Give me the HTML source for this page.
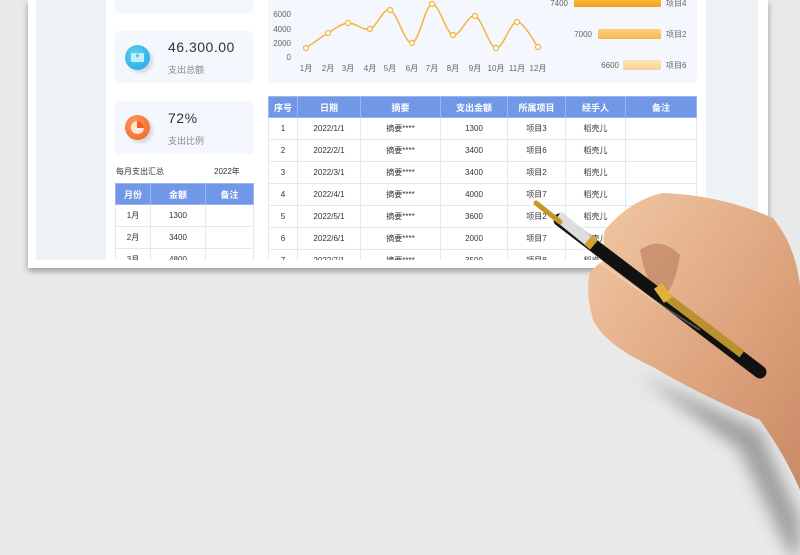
<!DOCTYPE html>
<html><head><meta charset="utf-8"><style>
*{margin:0;padding:0;box-sizing:border-box}
body{width:800px;height:555px;overflow:hidden;background:#e9e9e9;font-family:"Liberation Sans","Noto Sans CJK SC",sans-serif;position:relative}
.abs{position:absolute}
.paper{left:28px;top:0;width:740px;height:268px;background:#fff;box-shadow:0 3px 6px rgba(0,0,0,.35)}
.side{left:36px;top:0;width:70px;height:260px;background:#eef1f6}
.side2{left:706px;top:0;width:52px;height:260px;background:#eef1f6}
.card{background:#f4f7fd;border-radius:4px}
.val{font-size:14px;color:#333;letter-spacing:.5px}
.lab{font-size:9px;color:#888}
table{border-collapse:collapse;font-size:8px;color:#333;text-align:center}
td,th{border:1px solid #e3e8f3;height:22px;padding:0}
th{background:#7198e6;color:#fff;font-weight:bold;font-size:9px;border-color:#9db6ee;height:21px}
</style></head><body>
<div class="abs paper"></div>
<div class="abs side"></div>
<div class="abs side2"></div>
<div class="abs card" style="left:115px;top:-10px;width:138px;height:23px"></div>
<div class="abs card" style="left:115px;top:31px;width:138px;height:52px"></div>
<div class="abs card" style="left:115px;top:101px;width:139px;height:53px"></div>
<div class="abs" style="left:125px;top:45px;width:25px;height:25px;border-radius:50%;background:radial-gradient(circle at 40% 35%,#5fd2f3,#1aa5dd);box-shadow:3px 3px 3px rgba(0,0,0,.12)"></div>
<div class="abs" style="left:131px;top:53px;width:13px;height:9px;background:#bff0ff;border-radius:1px;font-size:6px;color:#2aa7dc;text-align:center;line-height:9px">¥</div>
<div class="abs" style="left:125px;top:115px;width:25px;height:25px;border-radius:50%;background:radial-gradient(circle at 40% 35%,#ff9a5e,#f0601e);box-shadow:3px 3px 3px rgba(0,0,0,.12)"></div>
<div class="abs" style="left:131px;top:121px;width:13px;height:13px;border-radius:50%;background:#ffe8da"></div>
<div class="abs" style="left:137px;top:121px;width:7px;height:7px;background:#f0601e;border-radius:0 7px 0 0"></div>
<div class="abs val" style="left:168px;top:39px">46.300.00</div>
<div class="abs lab" style="left:168px;top:63px">支出总额</div>
<div class="abs val" style="left:168px;top:110px">72%</div>
<div class="abs lab" style="left:168px;top:134px">支出比例</div>
<div class="abs" style="left:116px;top:166px;font-size:8px;color:#333">每月支出汇总</div>
<div class="abs" style="left:214px;top:166px;font-size:8px;color:#333">2022年</div>
<div class="abs" style="left:115px;top:183px;width:139px;height:77px;overflow:hidden">
<table style="width:139px"><tr><th style="width:35px">月份</th><th style="width:55px">金额</th><th>备注</th></tr>
<tr><td>1月</td><td>1300</td><td></td></tr><tr><td>2月</td><td>3400</td><td></td></tr><tr><td>3月</td><td>4800</td><td></td></tr></table></div>
<div class="abs card" style="left:268px;top:-10px;width:429px;height:93px"></div>
<svg class="abs" style="left:0;top:0" width="800" height="90">
<defs><linearGradient id="b1" x1="0" y1="0" x2="0" y2="1"><stop offset="0" stop-color="#fdc24a"/><stop offset="1" stop-color="#f5a01a"/></linearGradient>
<linearGradient id="b2" x1="0" y1="0" x2="0" y2="1"><stop offset="0" stop-color="#fed37c"/><stop offset="1" stop-color="#f6b850"/></linearGradient>
<linearGradient id="b3" x1="0" y1="0" x2="0" y2="1"><stop offset="0" stop-color="#fde4b0"/><stop offset="1" stop-color="#f6d394"/></linearGradient></defs>
<g font-size="8" fill="#666" text-anchor="end" font-family="Liberation Sans">
<text x="291" y="17">6000</text><text x="291" y="32">4000</text><text x="291" y="46">2000</text><text x="291" y="60">0</text></g>
<g font-size="8" fill="#666" text-anchor="middle" font-family="Liberation Sans,Noto Sans CJK SC">
<text x="306" y="71">1月</text><text x="328" y="71">2月</text><text x="348" y="71">3月</text><text x="370" y="71">4月</text><text x="390" y="71">5月</text><text x="412" y="71">6月</text><text x="432" y="71">7月</text><text x="453" y="71">8月</text><text x="475" y="71">9月</text><text x="496" y="71">10月</text><text x="517" y="71">11月</text><text x="538" y="71">12月</text></g>
<path d="M306 48 C309.7 45.5 321 37.2 328 33 C335 28.8 341 23.7 348 23 C355 22.3 363 31.2 370 29 C377 26.8 383 7.7 390 10 C397 12.3 405 44 412 43 C419 42 425.2 5.3 432 4 C438.8 2.7 445.8 33 453 35 C460 37 467.8 13.8 475 16 C482 18.2 489 47 496 48 C503 49 510 22.2 517 22 C524 21.8 534.5 42.8 538 47" fill="none" stroke="#f4b43a" stroke-width="1.5"/>
<g fill="#fff" stroke="#f4b43a" stroke-width="1.2">
<circle cx="306" cy="48" r="2.5"/><circle cx="328" cy="33" r="2.5"/><circle cx="348" cy="23" r="2.5"/><circle cx="370" cy="29" r="2.5"/><circle cx="390" cy="10" r="2.5"/><circle cx="412" cy="43" r="2.5"/><circle cx="432" cy="4" r="2.5"/><circle cx="453" cy="35" r="2.5"/><circle cx="475" cy="16" r="2.5"/><circle cx="496" cy="48" r="2.5"/><circle cx="517" cy="22" r="2.5"/><circle cx="538" cy="47" r="2.5"/></g>
<rect x="574" y="-3" width="87" height="10" fill="url(#b1)"/>
<rect x="598" y="29" width="63" height="10" fill="url(#b2)"/>
<rect x="623" y="60" width="38" height="10" fill="url(#b3)"/>
<g font-size="8" fill="#666" font-family="Liberation Sans,Noto Sans CJK SC">
<text x="568" y="6" text-anchor="end">7400</text><text x="592" y="37" text-anchor="end">7000</text><text x="619" y="68" text-anchor="end">6600</text>
<text x="666" y="6">项目4</text><text x="666" y="37">项目2</text><text x="666" y="68">项目6</text></g>
</svg>
<div class="abs" style="left:268px;top:96px;width:429px;height:164px;overflow:hidden">
<table style="width:429px">
<tr><th style="width:29px">序号</th><th style="width:63px">日期</th><th style="width:80px">摘要</th><th style="width:67px">支出金额</th><th style="width:58px">所属项目</th><th style="width:60px">经手人</th><th>备注</th></tr>
<tr><td>1</td><td>2022/1/1</td><td>摘要****</td><td>1300</td><td>项目3</td><td>稻壳儿</td><td></td></tr>
<tr><td>2</td><td>2022/2/1</td><td>摘要****</td><td>3400</td><td>项目6</td><td>稻壳儿</td><td></td></tr>
<tr><td>3</td><td>2022/3/1</td><td>摘要****</td><td>3400</td><td>项目2</td><td>稻壳儿</td><td></td></tr>
<tr><td>4</td><td>2022/4/1</td><td>摘要****</td><td>4000</td><td>项目7</td><td>稻壳儿</td><td></td></tr>
<tr><td>5</td><td>2022/5/1</td><td>摘要****</td><td>3600</td><td>项目2</td><td>稻壳儿</td><td></td></tr>
<tr><td>6</td><td>2022/6/1</td><td>摘要****</td><td>2000</td><td>项目7</td><td>稻壳儿</td><td></td></tr>
<tr><td>7</td><td>2022/7/1</td><td>摘要****</td><td>3500</td><td>项目8</td><td>稻壳儿</td><td></td></tr>
</table></div>
<svg class="abs" style="left:0;top:0" width="800" height="555">
<defs><linearGradient id="sk" x1="0" y1="0" x2="1" y2="1"><stop offset="0" stop-color="#f2c9a5"/><stop offset=".6" stop-color="#dca27c"/><stop offset="1" stop-color="#c98a66"/></linearGradient>
<filter id="bl"><feGaussianBlur stdDeviation="8"/></filter></defs>
<path d="M640 375 L760 430 L800 520 L800 555 L790 555 L740 450 Z" fill="#555" opacity=".5" filter="url(#bl)"/>
<path d="M605 230 Q630 200 663 193 Q720 195 773 218 Q795 245 800 285 L800 490 Q785 455 760 420 Q700 395 653 367 Q605 345 593 320 Q585 290 590 273 Q598 262 610 258 Q600 248 605 230 Z" fill="url(#sk)"/>
<path d="M640 250 Q660 235 680 255 Q675 290 660 300 Q645 280 640 250 Z" fill="#b97c5c" opacity=".6"/>
<path d="M560 220 L760 372" stroke="#111" stroke-width="13" stroke-linecap="round"/>
<path d="M668 298 L742 354" stroke="#b8922c" stroke-width="8"/>
<path d="M658 286 L668 300" stroke="#e0b23b" stroke-width="10"/>
<path d="M558 216 L590 242" stroke="#ddd" stroke-width="11"/>
<path d="M588 240 L594 245" stroke="#d4a431" stroke-width="12"/>
<path d="M536 203 L560 222" stroke="#c7952a" stroke-width="5" stroke-linecap="round"/>
<path d="M572 240 Q620 280 700 330" stroke="#fff" stroke-opacity=".25" stroke-width="2" fill="none"/>
</svg>
</body></html>
